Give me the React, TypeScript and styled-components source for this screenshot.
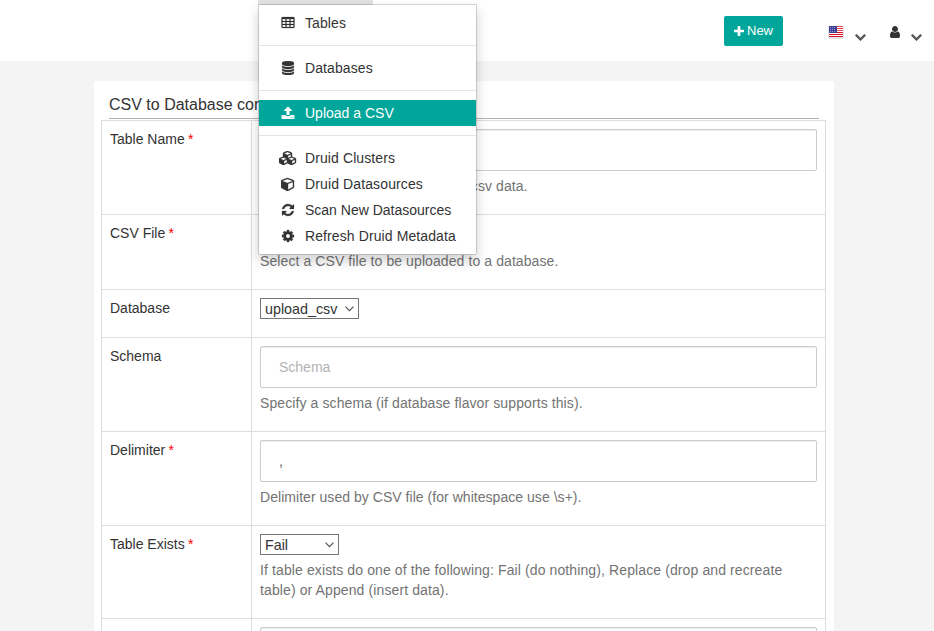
import React from "react";
import styled, { createGlobalStyle } from "styled-components";

const GlobalStyle = createGlobalStyle`
  *, *::before, *::after { box-sizing: border-box; }
  html, body { margin: 0; height: 100%; overflow: hidden; }
  body {
    background: #f4f4f4;
    color: #333;
    font: 14px/20px "Liberation Sans", Arial, sans-serif;
  }
`;

const Page = styled.div`
  width: 934px;
  height: 631px;
  overflow: hidden;
`;

const Navbar = styled.header`
  position: relative;
  display: flex;
  justify-content: flex-end;
  align-items: flex-start;
  height: 61px;
  padding: 16px 12px 0 0;
  background: #fff;
`;

const NewButton = styled.button`
  display: flex;
  align-items: center;
  gap: 3px;
  width: 59px;
  height: 30px;
  margin-right: 45px;
  padding: 0 0 1px 10px;
  border: 0;
  border-radius: 2px;
  background: #00a699;
  color: #fff;
  font: 13px/18px "Liberation Sans", Arial, sans-serif;
`;

const NavGroup = styled.div<{ $end?: number }>`
  display: flex;
  align-items: flex-start;
  gap: 11px;
  margin-right: ${(p) => p.$end ?? 0}px;
  padding-top: 10px;
`;

const Chevron = styled.span`
  display: flex;
  margin-top: 8px;
  color: #555;
`;

const ActiveTab = styled.div`
  position: absolute;
  top: 0;
  left: 258px;
  width: 115px;
  height: 5px;
  background: #e2e2e2;
`;

const Menu = styled.nav`
  position: absolute;
  z-index: 2;
  top: 4px;
  left: 258px;
  width: 219px;
  height: 251px;
  padding: 5px 0;
  border: 1px solid rgba(0, 0, 0, 0.15);
  border-radius: 0 0 2px 2px;
  background: #fff;
  background-clip: padding-box;
  box-shadow: 0 6px 12px rgba(0, 0, 0, 0.175);
`;

const MenuItem = styled.a<{ $active?: boolean; $tracking?: number }>`
  display: flex;
  align-items: center;
  height: 26px;
  padding-left: 20px;
  background: ${(p) => (p.$active ? "#00a699" : "transparent")};
  color: ${(p) => (p.$active ? "#fff" : "#333")};
  letter-spacing: ${(p) => p.$tracking ?? 0}px;
`;

const MenuIcon = styled.span`
  display: flex;
  justify-content: center;
  width: 18px;
  margin-right: 8px;
`;

const Divider = styled.div`
  height: 1px;
  margin: 9px 0;
  background: #e5e5e5;
`;

const Glyph = styled.svg`
  display: block;
  flex: none;
  fill: currentColor;
`;

const Card = styled.main`
  width: 740px;
  height: 600px;
  margin: 20px 0 0 94px;
  padding: 12px 8px 0 7px;
  border-radius: 2px;
  background: #fff;
`;

const Heading = styled.h4`
  height: 26px;
  margin: 0 7px 1px 8px;
  border-bottom: 1px solid #b3b3b3;
  font-size: 16px;
  font-weight: 400;
  line-height: 24px;
`;

const FormTable = styled.div`
  border: 1px solid #ddd;
`;

const Row = styled.div<{ $height: number }>`
  display: grid;
  grid-template-columns: 150px 1fr;
  height: ${(p) => p.$height}px;
  border-bottom: 1px solid #ddd;
`;

const LabelCell = styled.div`
  padding: 8px;
  border-right: 1px solid #ddd;
`;

const Required = styled.span`
  margin-left: -0.5px;
  color: #f00;
`;

const FieldCell = styled.div`
  padding: 8px;
`;

const TextInput = styled.input`
  display: block;
  width: 557px;
  height: 42px;
  padding: 0 18px;
  border: 1px solid #ccc;
  border-radius: 2px;
  background: #fff;
  box-shadow: inset 0 1px 1px rgba(0, 0, 0, 0.075);
  color: #555;
  font: 14px/20px "Liberation Sans", Arial, sans-serif;
  &::placeholder { color: #b3b3b3; opacity: 1; }
`;

const Help = styled.div<{ $top?: number; $tracking?: number }>`
  width: 550px;
  margin-top: ${(p) => p.$top ?? 5}px;
  color: #737373;
  letter-spacing: ${(p) => p.$tracking ?? 0.09}px;
`;

const SelectBox = styled.div<{ $width: number }>`
  display: flex;
  justify-content: space-between;
  align-items: center;
  width: ${(p) => p.$width}px;
  height: 21px;
  padding: 1px 4px 0;
  border: 1px solid #767676;
  font-size: 14.3px;
  line-height: 18px;
`;

const SelectArrow = styled.svg`
  display: block;
  margin-top: -1px;
  fill: none;
  stroke: #555;
  stroke-width: 1.2;
`;

const icons = {
  table:
    "M576 1376v-192q0-14-9-23t-23-9h-320q-14 0-23 9t-9 23v192q0 14 9 23t23 9h320q14 0 23-9t9-23zm0-384v-192q0-14-9-23t-23-9h-320q-14 0-23 9t-9 23v192q0 14 9 23t23 9h320q14 0 23-9t9-23zm512 384v-192q0-14-9-23t-23-9h-320q-14 0-23 9t-9 23v192q0 14 9 23t23 9h320q14 0 23-9t9-23zm-512-768v-192q0-14-9-23t-23-9h-320q-14 0-23 9t-9 23v192q0 14 9 23t23 9h320q14 0 23-9t9-23zm512 384v-192q0-14-9-23t-23-9h-320q-14 0-23 9t-9 23v192q0 14 9 23t23 9h320q14 0 23-9t9-23zm512 384v-192q0-14-9-23t-23-9h-320q-14 0-23 9t-9 23v192q0 14 9 23t23 9h320q14 0 23-9t9-23zm-512-768v-192q0-14-9-23t-23-9h-320q-14 0-23 9t-9 23v192q0 14 9 23t23 9h320q14 0 23-9t9-23zm512 384v-192q0-14-9-23t-23-9h-320q-14 0-23 9t-9 23v192q0 14 9 23t23 9h320q14 0 23-9t9-23zm0-384v-192q0-14-9-23t-23-9h-320q-14 0-23 9t-9 23v192q0 14 9 23t23 9h320q14 0 23-9t9-23zm128-320v1088q0 66-47 113t-113 47h-1344q-66 0-113-47t-47-113v-1088q0-66 47-113t113-47h1344q66 0 113 47t47 113z",
  database:
    "M896 768q237 0 443-43t325-127v170q0 69-103 128t-280 93.5-385 34.5-385-34.5-280-93.5-103-128v-170q119 84 325 127t443 43zm0 768q237 0 443-43t325-127v170q0 69-103 128t-280 93.5-385 34.5-385-34.5-280-93.5-103-128v-170q119 84 325 127t443 43zm0-384q237 0 443-43t325-127v170q0 69-103 128t-280 93.5-385 34.5-385-34.5-280-93.5-103-128v-170q119 84 325 127t443 43zm0-1152q208 0 385 34.5t280 93.5 103 128v128q0 69-103 128t-280 93.5-385 34.5-385-34.5-280-93.5-103-128v-128q0-69 103-128t280-93.5 385-34.5z",
  upload:
    "M1344 1472q0-26-19-45t-45-19-45 19-19 45 19 45 45 19 45-19 19-45zm256 0q0-26-19-45t-45-19-45 19-19 45 19 45 45 19 45-19 19-45zm128-224v320q0 40-28 68t-68 28h-1472q-40 0-68-28t-28-68v-320q0-40 28-68t68-28h427q21 56 70.5 92t110.5 36h256q61 0 110.5-36t70.5-92h427q40 0 68 28t28 68zm-325-648q-17 40-59 40h-256v448q0 26-19 45t-45 19h-256q-26 0-45-19t-19-45v-448h-256q-42 0-59-40-17-39 14-69l448-448q18-19 45-19t45 19l448 448q31 30 14 69z",
  cubes:
    "M640 1632l384-192v-314l-384 164v342zm-64-454l404-173-404-173-404 173zm1088 454l384-192v-314l-384 164v342zm-64-454l404-173-404-173-404 173zm-448-293l384-165v-266l-384 164v267zm-64-379l441-189-441-189-441 189zm1088 518v416q0 36-19 67t-52 47l-448 224q-25 14-57 14t-57-14l-448-224q-4-2-7-4-2 2-7 4l-448 224q-25 14-57 14t-57-14l-448-224q-33-16-52-47t-19-67v-416q0-38 21.5-70t56.5-48l434-186v-400q0-38 21.5-70t56.5-48l448-192q23-10 50-10t50 10l448 192q35 16 56.5 48t21.5 70v400l434 186q36 16 57 48t21 70z",
  cube:
    "M896 1629l640-349v-636l-640 233v752zm-64-865l698-254-698-254-698 254zm832-252v768q0 35-18 65t-49 47l-704 384q-28 16-61 16t-61-16l-704-384q-31-17-49-47t-18-65v-768q0-40 23-73t61-47l704-256q22-8 44-8t44 8l704 256q38 14 61 47t23 73z",
  refresh:
    "M1639 1056q0 5-1 7-64 268-268 434.5t-478 166.5q-146 0-282.5-55t-243.5-157l-129 129q-19 19-45 19t-45-19-19-45v-448q0-26 19-45t45-19h448q26 0 45 19t19 45-19 45l-137 137q71 66 161 102t187 36q134 0 250-65t186-179q11-17 53-117 8-23 30-23h192q13 0 22.5 9.5t9.5 22.5zm25-800v448q0 26-19 45t-45 19h-448q-26 0-45-19t-19-45 19-45l138-138q-148-137-349-137-134 0-250 65t-186 179q-11 17-53 117-8 23-30 23h-199q-13 0-22.5-9.5t-9.5-22.5v-7q65-268 270-434.5t480-166.5q146 0 284 55.5t245 156.5l130-129q19-19 45-19t45 19 19 45z",
  cog:
    "M1152 896q0-106-75-181t-181-75-181 75-75 181 75 181 181 75 181-75 75-181zm512-109v222q0 12-8 23t-20 13l-185 28q-19 54-39 91 35 50 107 138 10 12 10 25t-9 23q-27 37-99 108t-94 71q-12 0-26-9l-138-108q-44 23-91 38-16 136-29 186-7 28-36 28h-222q-14 0-24.5-8.5t-11.5-21.5l-28-184q-49-16-90-37l-141 107q-10 9-25 9-14 0-25-11-126-114-165-168-7-10-7-23 0-12 8-23 15-21 51-66.5t54-70.5q-27-50-41-99l-183-27q-13-2-21-12.5t-8-23.5v-222q0-12 8-23t19-13l186-28q14-46 39-92-40-57-107-138-10-12-10-24 0-10 9-23 26-36 98.5-107.5t94.5-71.5q13 0 26 10l138 107q44-23 91-38 16-136 29-186 7-28 36-28h222q14 0 24.5 8.5t11.5 21.5l28 184q49 16 90 37l142-107q9-9 24-9 13 0 25 10 129 119 165 170 7 8 7 22 0 12-8 23-15 21-51 66.5t-54 70.5q26 50 41 98l183 28q13 2 21 12.5t8 23.5z",
  plus:
    "M1600 736v192q0 40-28 68t-68 28h-416v416q0 40-28 68t-68 28h-192q-40 0-68-28t-28-68v-416h-416q-40 0-68-28t-28-68v-192q0-40 28-68t68-28h416v-416q0-40 28-68t68-28h192q40 0 68 28t28 68v416h416q40 0 68 28t28 68z",
  user:
    "M1536 1399q0 109-62.5 187t-150.5 78h-854q-88 0-150.5-78t-62.5-187q0-85 8.5-160.5t31.5-152 58.5-131 94-89 134.5-34.5q131 128 313 128t313-128q76 0 134.5 34.5t94 89 58.5 131 31.5 152 8.5 160.5zm-256-887q0 159-112.5 271.5t-271.5 112.5-271.5-112.5-112.5-271.5 112.5-271.5 271.5-112.5 271.5 112.5 112.5 271.5z",
  chevron:
    "M1683 808l-742 741q-19 19-45 19t-45-19l-742-741q-19-19-19-45.5t19-45.5l166-165q19-19 45-19t45 19l531 531 531-531q19-19 45-19t45 19l166 165q19 19 19 45.5t-19 45.5z",
};

type IconName = keyof typeof icons;

const viewBoxes: Partial<Record<IconName, string>> = {
  cubes: "0 0 2304 1792",
  plus: "192 128 1408 1408",
  user: "256 128 1280 1536",
  chevron: "90 533 1612 1035",
};

function Icon({
  name,
  width = 14,
  height = 14,
  weight = 0,
}: {
  name: IconName;
  width?: number;
  height?: number;
  weight?: number;
}) {
  return (
    <Glyph width={width} height={height} viewBox={viewBoxes[name] ?? "0 0 1792 1792"} aria-hidden>
      <path d={icons[name]} stroke="currentColor" strokeWidth={weight} />
    </Glyph>
  );
}

function Flag() {
  return (
    <Glyph width="16" height="13" viewBox="0 0 16 13" shapeRendering="crispEdges" aria-hidden>
      <rect x="0" y="0" width="16" height="12" fill="#e4e4e4" />
      <rect x="1" y="12" width="14" height="1" fill="#e4e4e4" />
      <rect x="1" y="0" width="14" height="11" fill="#fff" />
      {[0, 2, 4, 6, 8, 10].map((y) => (
        <rect key={y} x="1" y={y} width="14" height="1" fill={y < 6 ? "#f0444f" : "#d9102a"} />
      ))}
      <rect x="1" y="0" width="8" height="7" fill="#3f4196" />
      {[1, 3, 5].map((y) =>
        [2, 4, 6].map((x) => <rect key={`${x}-${y}`} x={x} y={y} width="1" height="1" fill="#9394cc" />)
      )}
    </Glyph>
  );
}

function Select({ value, width }: { value: string; width: number }) {
  return (
    <SelectBox $width={width} role="combobox">
      <span>{value}</span>
      <SelectArrow width="9" height="6" viewBox="0 0 9 6">
        <path d="M0.5 0.7L4.5 4.7L8.5 0.7" />
      </SelectArrow>
    </SelectBox>
  );
}

interface MenuEntry {
  icon: IconName;
  text: string;
  active?: boolean;
  width?: number;
  weight?: number;
  tracking?: number;
  divided?: boolean;
}

const menu: MenuEntry[] = [
  { icon: "table", text: "Tables", weight: 30, tracking: 0.1, divided: true },
  { icon: "database", text: "Databases", weight: 30, tracking: 0.1, divided: true },
  { icon: "upload", text: "Upload a CSV", active: true, divided: true },
  { icon: "cubes", text: "Druid Clusters", width: 18, weight: 45, tracking: 0.1 },
  { icon: "cube", text: "Druid Datasources", weight: 45, tracking: 0.12 },
  { icon: "refresh", text: "Scan New Datasources", weight: 30 },
  { icon: "cog", text: "Refresh Druid Metadata", weight: 30, tracking: 0.1 },
];

function Field({
  label,
  required,
  height,
  children,
}: {
  label?: string;
  required?: boolean;
  height: number;
  children: React.ReactNode;
}) {
  return (
    <Row $height={height}>
      <LabelCell>
        {label}
        {required && <Required> *</Required>}
      </LabelCell>
      <FieldCell>{children}</FieldCell>
    </Row>
  );
}

export default function App() {
  return (
    <Page>
      <GlobalStyle />
      <Navbar>
        <ActiveTab />
        <Menu>
          {menu.map((item) => (
            <React.Fragment key={item.text}>
              <MenuItem $active={item.active} $tracking={item.tracking}>
                <MenuIcon>
                  <Icon name={item.icon} width={item.width} weight={item.weight} />
                </MenuIcon>
                {item.text}
              </MenuItem>
              {item.divided && <Divider />}
            </React.Fragment>
          ))}
        </Menu>
        <NewButton>
          <Icon name="plus" width={10} height={10} />
          New
        </NewButton>
        <NavGroup $end={24}>
          <Flag />
          <Chevron>
            <Icon name="chevron" width={11} height={7} />
          </Chevron>
        </NavGroup>
        <NavGroup>
          <Icon name="user" width={10} height={12} />
          <Chevron>
            <Icon name="chevron" width={11} height={7} />
          </Chevron>
        </NavGroup>
      </Navbar>
      <Card>
        <Heading>CSV to Database configuration</Heading>
        <FormTable>
          <Field label="Table Name" required height={94}>
            <TextInput />
            <Help $tracking={0.07}>Name of table to be created from csv data.</Help>
          </Field>
          <Field label="CSV File" required height={75}>
            <Help $top={28}>Select a CSV file to be uploaded to a database.</Help>
          </Field>
          <Field label="Database" height={48}>
            <Select value="upload_csv" width={99} />
          </Field>
          <Field label="Schema" height={94}>
            <TextInput placeholder="Schema" />
            <Help $tracking={0.1}>Specify a schema (if database flavor supports this).</Help>
          </Field>
          <Field label="Delimiter" required height={94}>
            <TextInput defaultValue="," />
            <Help $tracking={0.04}>Delimiter used by CSV file (for whitespace use \s+).</Help>
          </Field>
          <Field label="Table Exists" required height={93}>
            <Select value="Fail" width={79} />
            <Help $tracking={0.11}>
              If table exists do one of the following: Fail (do nothing), Replace (drop and recreate table) or
              Append (insert data).
            </Help>
          </Field>
          <Field height={94}>
            <TextInput />
          </Field>
        </FormTable>
      </Card>
    </Page>
  );
}
